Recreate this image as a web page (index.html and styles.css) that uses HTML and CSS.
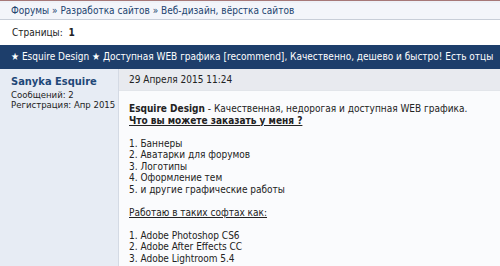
FILE: index.html
```html
<!DOCTYPE html>
<html lang="ru">
  <head>
    <meta charset="utf-8" />
    <title>Esquire Design</title>
    <link rel="stylesheet" href="styles.css">
  </head>
  <body>
    <div class="topline"></div>
    <div class="breadcrumb">
      <a href="#">Форумы</a> » <a href="#">Разработка сайтов</a> » <a href="#">Веб-дизайн, вёрстка сайтов</a>
    </div>
    <div class="pages">Страницы: <strong>1</strong></div>
    <div class="thread-title">★ Esquire Design ★ Доступная WEB графика [recommend], Качественно, дешево и быстро! Есть отцы</div>
    <div class="post">
      <div class="post-user">
        <div class="username">Sanyka Esquire</div>
        <div class="user-info">Сообщений: 2</div>
        <div class="user-info">Регистрация: Апр 2015</div>
      </div>
      <div class="post-main">
        <div class="post-date">29 Апреля 2015 11:24</div>
        <div class="post-body">
          <p><strong>Esquire Design</strong> - Качественная, недорогая и доступная WEB графика.<br>
          <strong><u>Что вы можете заказать у меня ?</u></strong></p>
          <p>1. Баннеры<br>
          2. Аватарки для форумов<br>
          3. Логотипы<br>
          4. Оформление тем<br>
          5. и другие графические работы</p>
          <p><u>Работаю в таких софтах как:</u></p>
          <p>1. Adobe Photoshop CS6<br>
          2. Adobe After Effects CC<br>
          3. Adobe Lightroom 5.4</p>
        </div>
      </div>
    </div>
  </body>
</html>
```

FILE: styles.css
```css
* {
  margin: 0;
  padding: 0;
  box-sizing: border-box;
}
body {
  font-family: "DejaVu Sans Condensed", "DejaVu Sans", sans-serif;
  font-size: 10px;
  color: #222;
  background: #fff;
  overflow: hidden;
}
a {
  color: #22446f;
  text-decoration: none;
}
.topline {
  height: 3px;
  border-top: 1px solid #a67878;
  background: #eef1f7;
}
.breadcrumb {
  height: 17px;
  line-height: 16px;
  padding-left: 11px;
  background: #f3f5fa;
  border-bottom: 1px solid #c8ced8;
  color: #22446f;
}
.pages {
  height: 25px;
  line-height: 25px;
  padding-left: 12px;
  color: #222;
}
.pages strong {
  margin-left: 3px;
}
.thread-title {
  height: 24px;
  line-height: 24px;
  padding-left: 11px;
  background: #1d3e6b;
  color: #fff;
  white-space: nowrap;
  overflow: hidden;
}
.post {
  display: grid;
  grid-template-columns: 119px 1fr;
  min-height: 200px;
}
.post-user {
  background: #e7ecf4;
  border-right: 1px solid #d4dae4;
  padding: 6px 2px 6px 11px;
  line-height: 10px;
  white-space: nowrap;
}
.username {
  font-size: 11px;
  font-weight: bold;
  color: #1f4878;
  margin-bottom: 1px;
  line-height: 14px;
}
.user-info {
  font-size: 9.5px;
}
.post-date {
  height: 22px;
  line-height: 22px;
  padding-left: 10px;
  background: #e8eaef;
  border-bottom: 1px solid #e2e5ea;
}
.post-body {
  padding: 12px 10px;
  background: #fafbfd;
  line-height: 11.5px;
}
.post-body p {
  margin-bottom: 11.5px;
}
```
